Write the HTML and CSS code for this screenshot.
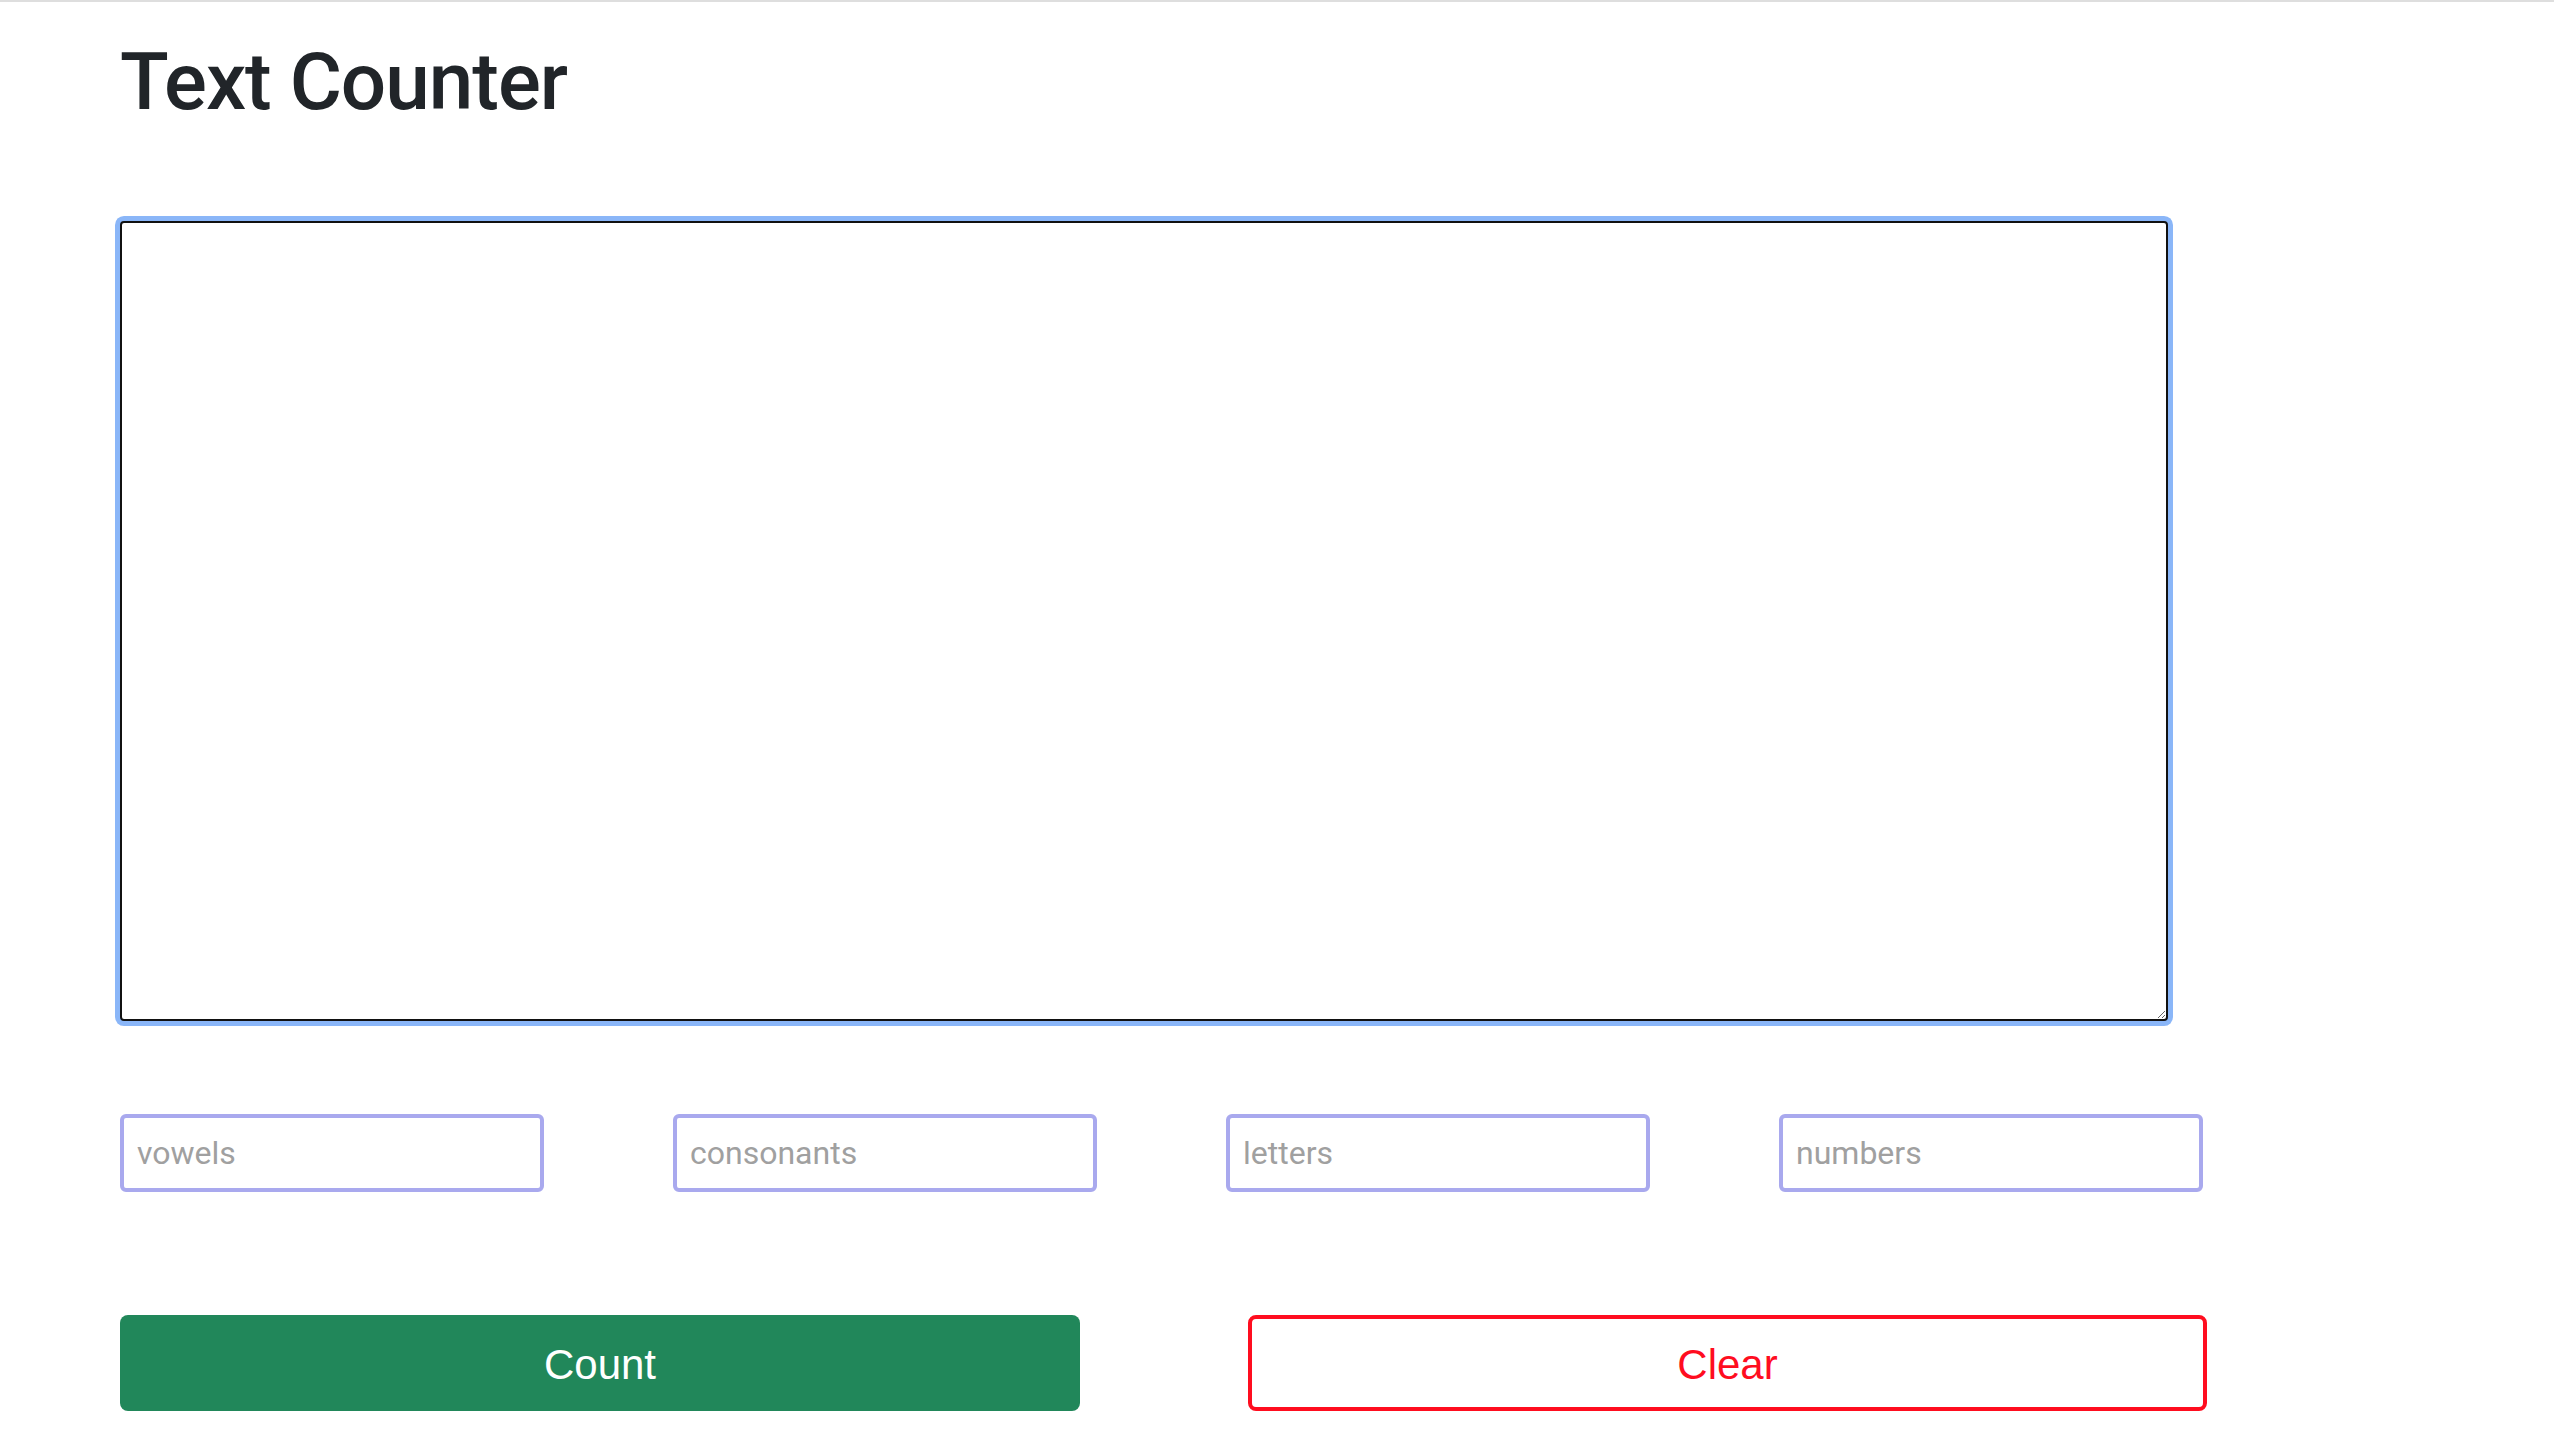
FILE: index.html
```html
<!DOCTYPE html>
<html lang="en">
<head>
    <meta charset="UTF-8">
    <meta name="viewport" content="width=device-width, initial-scale=1.0">
    <title>Text Counter</title>
    <link rel="stylesheet" href="styles.css">
</head>
<body>
    <div class="page">
        <h1 class="title">Text Counter</h1>

        <textarea id="text" class="text-box"></textarea>

        <div class="results">
            <input type="text" id="vowels" class="result" placeholder="vowels" readonly>
            <input type="text" id="consonants" class="result" placeholder="consonants" readonly>
            <input type="text" id="letters" class="result" placeholder="letters" readonly>
            <input type="text" id="numbers" class="result" placeholder="numbers" readonly>
        </div>

        <div class="actions">
            <button type="button" class="btn btn-count" id="countBtn">Count</button>
            <button type="button" class="btn btn-clear" id="clearBtn">Clear</button>
        </div>
    </div>

    <script>
        document.addEventListener('DOMContentLoaded', function() {
            const text = document.getElementById('text');

            document.getElementById('countBtn').addEventListener('click', function() {
                const value = text.value;
                const vowels = (value.match(/[aeiou]/gi) || []).length;
                const letters = (value.match(/[a-z]/gi) || []).length;

                document.getElementById('vowels').value = vowels;
                document.getElementById('consonants').value = letters - vowels;
                document.getElementById('letters').value = letters;
                document.getElementById('numbers').value = (value.match(/[0-9]/g) || []).length;
            });

            // Reset everything
            document.getElementById('clearBtn').addEventListener('click', function() {
                text.value = '';
                document.querySelectorAll('.result').forEach(input => input.value = '');
            });
        });
    </script>
</body>
</html>
```

FILE: styles.css
```css
* {
    margin: 0;
    padding: 0;
    box-sizing: border-box;
}

body {
    background-color: #fff;
    border-top: 2px solid #dedede;
    font-family: 'Liberation Sans', Arial, sans-serif;
    color: #212529;
}

.page {
    padding: 32px 0 40px 120px;
}

.title {
    font-family: Roboto, 'Liberation Sans', sans-serif;
    font-size: 80px;
    font-weight: 500;
    line-height: 1.2;
    letter-spacing: -1px;
    color: #212529;
}

.text-box {
    display: block;
    width: 2048px;
    height: 800px;
    margin-top: 91px;
    padding: 8px;
    border: 2px solid #111;
    border-radius: 4px;
    box-shadow: 0 0 0 5px #8ab6f8;
    font-family: 'Liberation Sans', Arial, sans-serif;
    font-size: 32px;
    outline: none;
    resize: both;
}

.results {
    display: grid;
    grid-template-columns: repeat(4, 424px);
    column-gap: 129px;
    margin-top: 93px;
}

.result {
    height: 78px;
    padding: 0 13px;
    border: 4px solid #a9a9ee;
    border-radius: 6px;
    font-family: Roboto, 'Liberation Sans', sans-serif;
    font-size: 32px;
    color: #333;
    outline: none;
}

.result::placeholder {
    color: #a0a0a0;
}

.actions {
    display: grid;
    grid-template-columns: 960px 959px;
    column-gap: 168px;
    margin-top: 123px;
}

.btn {
    height: 96px;
    padding-top: 4px;
    border-radius: 8px;
    font-family: 'Liberation Sans', Arial, sans-serif;
    font-size: 42px;
    cursor: pointer;
}

.btn-count {
    background-color: #21875a;
    border: none;
    color: #fff;
}

.btn-clear {
    background-color: #fff;
    border: 4px solid #ff0d1f;
    color: #ff0d1f;
}
```
